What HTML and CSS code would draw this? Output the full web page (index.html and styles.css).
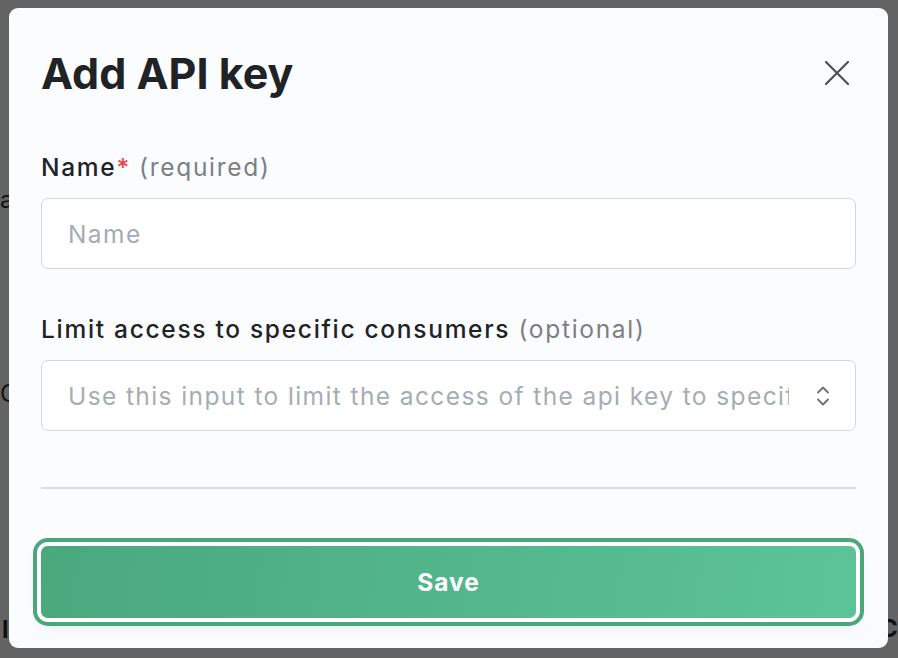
FILE: index.html
```html
<!DOCTYPE html>
<html lang="en">
<head>
<meta charset="utf-8">
<title>Add API key</title>
<link rel="stylesheet" href="styles.css">
</head>
<body>
<div class="backdrop">
  <span class="bg-text bg-a">ar</span>
  <span class="bg-text bg-b">Or</span>
  <span class="bg-text bg-c">l</span>
  <span class="bg-text bg-d">C</span>
</div>
<div class="overlay">
  <div class="modal">
    <div class="modal-header">
      <h1 class="title">Add API key</h1>
      <button class="close" aria-label="Close">
        <svg width="24" height="24" viewBox="0 0 24 24" fill="none" stroke="#4b5058" stroke-width="2.2" stroke-linecap="round"><path d="M1 1L23 23M23 1L1 23"/></svg>
      </button>
    </div>
    <div class="field">
      <label class="label">Name<span class="req">*</span> <span class="hint">(required)</span></label>
      <div class="input"><span class="placeholder">Name</span></div>
    </div>
    <div class="field">
      <label class="label">Limit access to specific consumers <span class="hint">(optional)</span></label>
      <div class="input select"><span class="placeholder clip">Use this input to limit the access of the api key to specific consumers</span>
        <svg class="chev" width="14" height="20" viewBox="0 0 14 20" fill="none" stroke="#6b7078" stroke-width="1.8" stroke-linecap="round" stroke-linejoin="round"><path d="M2 6.5L7 1.5L12 6.5M2 13.5L7 18.5L12 13.5"/></svg>
      </div>
    </div>
    <hr class="divider">
    <div class="actions">
      <button class="save">Save</button>
    </div>
  </div>
</div>
</body>
</html>
```
FILE: styles.css
```css
* { box-sizing: border-box; }
html, body { margin: 0; height: 100%; }
body {
  background: #636363;
  font-family: Inter, "DejaVu Sans", sans-serif;
  position: relative;
  overflow: hidden;
}
.backdrop { position: absolute; inset: 0; }
.bg-text { position: absolute; color: #111; font-size: 24px; font-family: Inter, sans-serif; }
.bg-a { left: 0; top: 185px; }
.bg-b { left: 0; top: 379px; }
.bg-c { left: 2px; top: 615px; font-weight: 700; }
.bg-d { left: 880px; top: 614px; font-weight: 700; }
.overlay {
  position: relative;
  padding: 8px 10px 10px 9px;
}
.modal {
  width: 879px;
  height: 640px;
  background: #fbfcfe;
  border-radius: 9px;
  padding: 37px 32px 0 32px;
  display: flex;
  flex-direction: column;
}
.modal-header {
  display: flex;
  justify-content: space-between;
  align-items: center;
  height: 56px;
}
.title {
  margin: 0;
  font-size: 43px;
  font-weight: 700;
  color: #1f2326;
  line-height: 56px;
}
.close {
  background: none;
  border: 0;
  padding: 0;
  margin-right: 7px;
  width: 24px;
  height: 24px;
  display: flex;
}
.field { display: flex; flex-direction: column; }
.label {
  font-size: 24.5px;
  font-weight: 500;
  color: #1f2326;
  line-height: 32px;
  letter-spacing: 1.7px;
  margin-top: 50px;
  margin-bottom: 15px;
}
.field + .field .label { margin-top: 44px; }
.req { color: #e5484d; }
.hint { color: #7b7f86; font-weight: 400; }
.input {
  height: 71px;
  border: 1.5px solid #d3d6dc;
  border-radius: 7px;
  background: #fff;
  display: flex;
  align-items: center;
  padding: 0 25px 0 26px;
  font-size: 24.5px;
  letter-spacing: 1.4px;
}
.placeholder { color: #a6acb4; white-space: nowrap; }
.clip { overflow: hidden; flex: 1; }
.select { gap: 27px; }
.chev { flex: none; }
.divider {
  border: 0;
  height: 1.5px;
  background: #dcdde2;
  margin: 56px 0 0 0;
}
.actions { margin-top: 57px; }
.save {
  width: 100%;
  height: 72px;
  border: 0;
  border-radius: 7px;
  background: linear-gradient(100deg, #4aa87d 0%, #5cc399 100%);
  color: #fff;
  font-family: Inter, sans-serif;
  font-size: 24.5px;
  font-weight: 700;
  letter-spacing: 1px;
  box-shadow: 0 0 0 4px #fff, 0 0 0 8px #4aa77b, 0 8px 18px rgba(0,0,0,0.08);
}
```
